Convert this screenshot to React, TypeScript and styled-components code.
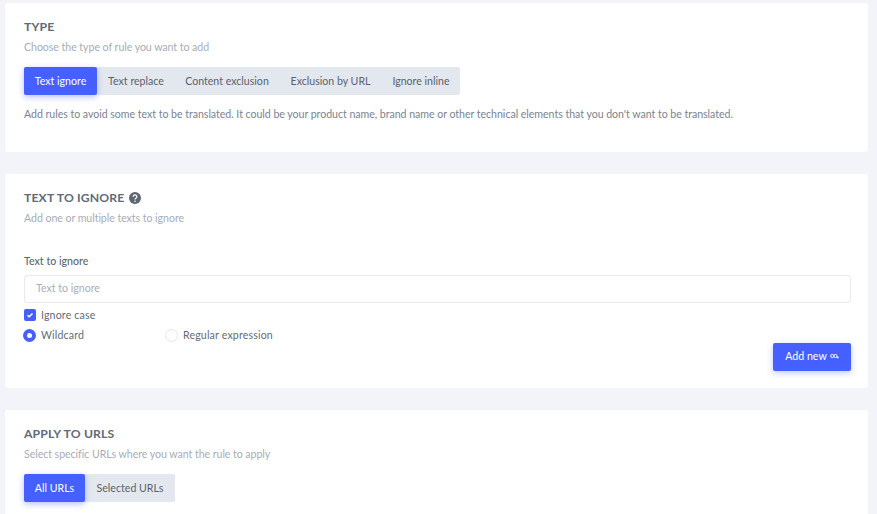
import React from "react";
import styled, { createGlobalStyle } from "styled-components";

const Global = createGlobalStyle`
  html, body { margin: 0; padding: 0; background: #f3f4f9; height: 100%; overflow: hidden; }
  body { font-family: "Lato", "Open Sans", sans-serif; }
  * { box-sizing: border-box; }
`;

const Page = styled.div`
  display: flex;
  flex-direction: column;
  gap: 22px;
  padding: 3px 9px 0 5px;
  height: 514px;
  overflow: hidden;
`;

const Card = styled.section<{ $h: number }>`
  background: #fff;
  border-radius: 3px;
  padding: 16px 17px 0 19px;
  flex: none;
  height: ${(p) => p.$h}px;
  display: flex;
  flex-direction: column;
`;

const Title = styled.h3`
  margin: 0;
  font-size: 12.2px;
  line-height: 16px;
  font-weight: 700;
  color: #616a77;
  letter-spacing: 0.15px;
  display: flex;
  align-items: center;
  gap: 4px;
`;

const Sub = styled.p`
  margin: 4px 0 0;
  font-size: 10.6px;
  line-height: 16px;
  color: #a7adb6;
  letter-spacing: -0.05px;
`;

const Tabs = styled.div`
  display: inline-flex;
  align-self: flex-start;
  margin-top: 12px;
  height: 28px;
  background: #e3e8ee;
  border-radius: 2px;
`;

const Tab = styled.button<{ $active?: boolean; $w: number }>`
  width: ${(p) => p.$w}px;
  height: 28px;
  padding: 0;
  border: 0;
  border-radius: 2px;
  font-family: inherit;
  font-size: 10.6px;
  color: ${(p) => (p.$active ? "#fff" : "#5a626e")};
  background: ${(p) => (p.$active ? "#4660ff" : "transparent")};
  box-shadow: ${(p) => (p.$active ? "0 2px 6px rgba(70,96,255,.4)" : "none")};
`;

const Note = styled.p`
  margin: 11px 0 0;
  font-size: 10.6px;
  line-height: 16px;
  color: #7b838e;
  letter-spacing: -0.033px;
`;

const FieldLabel = styled.label`
  margin-top: 27px;
  font-size: 10.6px;
  line-height: 16px;
  font-weight: 500;
  color: #5d6673;
`;

const Input = styled.input`
  margin-top: 6px;
  width: 100%;
  height: 28px;
  flex: none;
  padding: 0 11px 2px;
  border: 1px solid #e8eaee;
  border-radius: 3px;
  background: #fff;
  font-family: inherit;
  font-size: 10.6px;
  outline: none;
  &::placeholder { color: #aab0b9; opacity: 1; }
`;

const CheckRow = styled.div`
  display: flex;
  align-items: center;
  margin-top: 5px;
  height: 14px;
`;

const Options = styled.div`
  display: flex;
  align-items: center;
  margin-top: 5px;
  height: 16px;
`;

const Check = styled.span`
  width: 12px;
  height: 12px;
  border-radius: 2px;
  background: #4660ff;
  display: flex;
  align-items: center;
  justify-content: center;
  margin-right: 5px;
`;

const Radio = styled.span<{ $on?: boolean }>`
  width: 13px;
  height: 13px;
  flex: none;
  border-radius: 50%;
  margin-right: 5px;
  margin-left: ${(p) => (p.$on ? "-1px" : "0")};
  background: #fff;
  border: ${(p) => (p.$on ? "4px solid #4660ff" : "1px solid #e4e7eb")};
`;

const OptText = styled.span<{ $w?: number }>`
  font-size: 10.6px;
  line-height: 14px;
  color: #636b77;
  letter-spacing: 0.16px;
  width: ${(p) => (p.$w ? `${p.$w}px` : "auto")};
`;

const Footer = styled.div`
  display: flex;
  justify-content: flex-end;
`;

const AddButton = styled.button`
  width: 78px;
  height: 28px;
  border: 0;
  padding: 0 0 2px;
  border-radius: 2px;
  background: #4660ff;
  color: #fff;
  font-family: inherit;
  font-size: 10.6px;
  box-shadow: 0 2px 6px rgba(70, 96, 255, 0.35);
  display: flex;
  align-items: center;
  justify-content: center;
  gap: 3px;
`;

export default function App() {
  return (
    <>
      <Global />
      <Page>
        <Card $h={149}>
          <Title>TYPE</Title>
          <Sub>Choose the type of rule you want to add</Sub>
          <Tabs>
            <Tab $active $w={73}>Text ignore</Tab>
            <Tab $w={78}>Text replace</Tab>
            <Tab $w={104}>Content exclusion</Tab>
            <Tab $w={103}>Exclusion by URL</Tab>
            <Tab $w={78}>Ignore inline</Tab>
          </Tabs>
          <Note>
            Add rules to avoid some text to be translated. It could be your product name, brand name or other technical elements that you don't want to be translated.
          </Note>
        </Card>
        <Card $h={214}>
          <Title>
            TEXT TO IGNORE
            <svg width="12" height="12" viewBox="0 0 12 12">
              <circle cx="6" cy="6" r="6" fill="#5d6673" />
              <path d="M4.2 4.7a1.8 1.8 0 1 1 2.7 1.5c-.6.35-.9.6-.9 1.2" fill="none" stroke="#fff" strokeWidth="1.3" />
              <circle cx="6" cy="9.2" r=".8" fill="#fff" />
            </svg>
          </Title>
          <Sub>Add one or multiple texts to ignore</Sub>
          <FieldLabel>Text to ignore</FieldLabel>
          <Input placeholder="Text to ignore" />
          <CheckRow>
            <Check>
              <svg width="8" height="8" viewBox="0 0 8 8">
                <path d="M1.5 4.2 3.2 5.8 6.5 2.4" fill="none" stroke="#fff" strokeWidth="1.5" />
              </svg>
            </Check>
            <OptText>Ignore case</OptText>
          </CheckRow>
          <Options>
            <Radio $on />
            <OptText $w={124}>Wildcard</OptText>
            <Radio />
            <OptText>Regular expression</OptText>
          </Options>
          <Footer>
            <AddButton>
              Add new
              <svg width="9" height="6" viewBox="0 0 9 6">
                <circle cx="2.2" cy="3" r="1.6" fill="none" stroke="#fff" strokeWidth=".9" />
                <circle cx="5.4" cy="3" r="1.6" fill="none" stroke="#fff" strokeWidth=".9" />
                <path d="M6.6 4.4h2.2M7.7 3.3v2.2" stroke="#fff" strokeWidth=".8" />
              </svg>
            </AddButton>
          </Footer>
        </Card>
        <Card $h={120}>
          <Title>APPLY TO URLS</Title>
          <Sub>Select specific URLs where you want the rule to apply</Sub>
          <Tabs>
            <Tab $active $w={61}>All URLs</Tab>
            <Tab $w={90}>Selected URLs</Tab>
          </Tabs>
        </Card>
      </Page>
    </>
  );
}
